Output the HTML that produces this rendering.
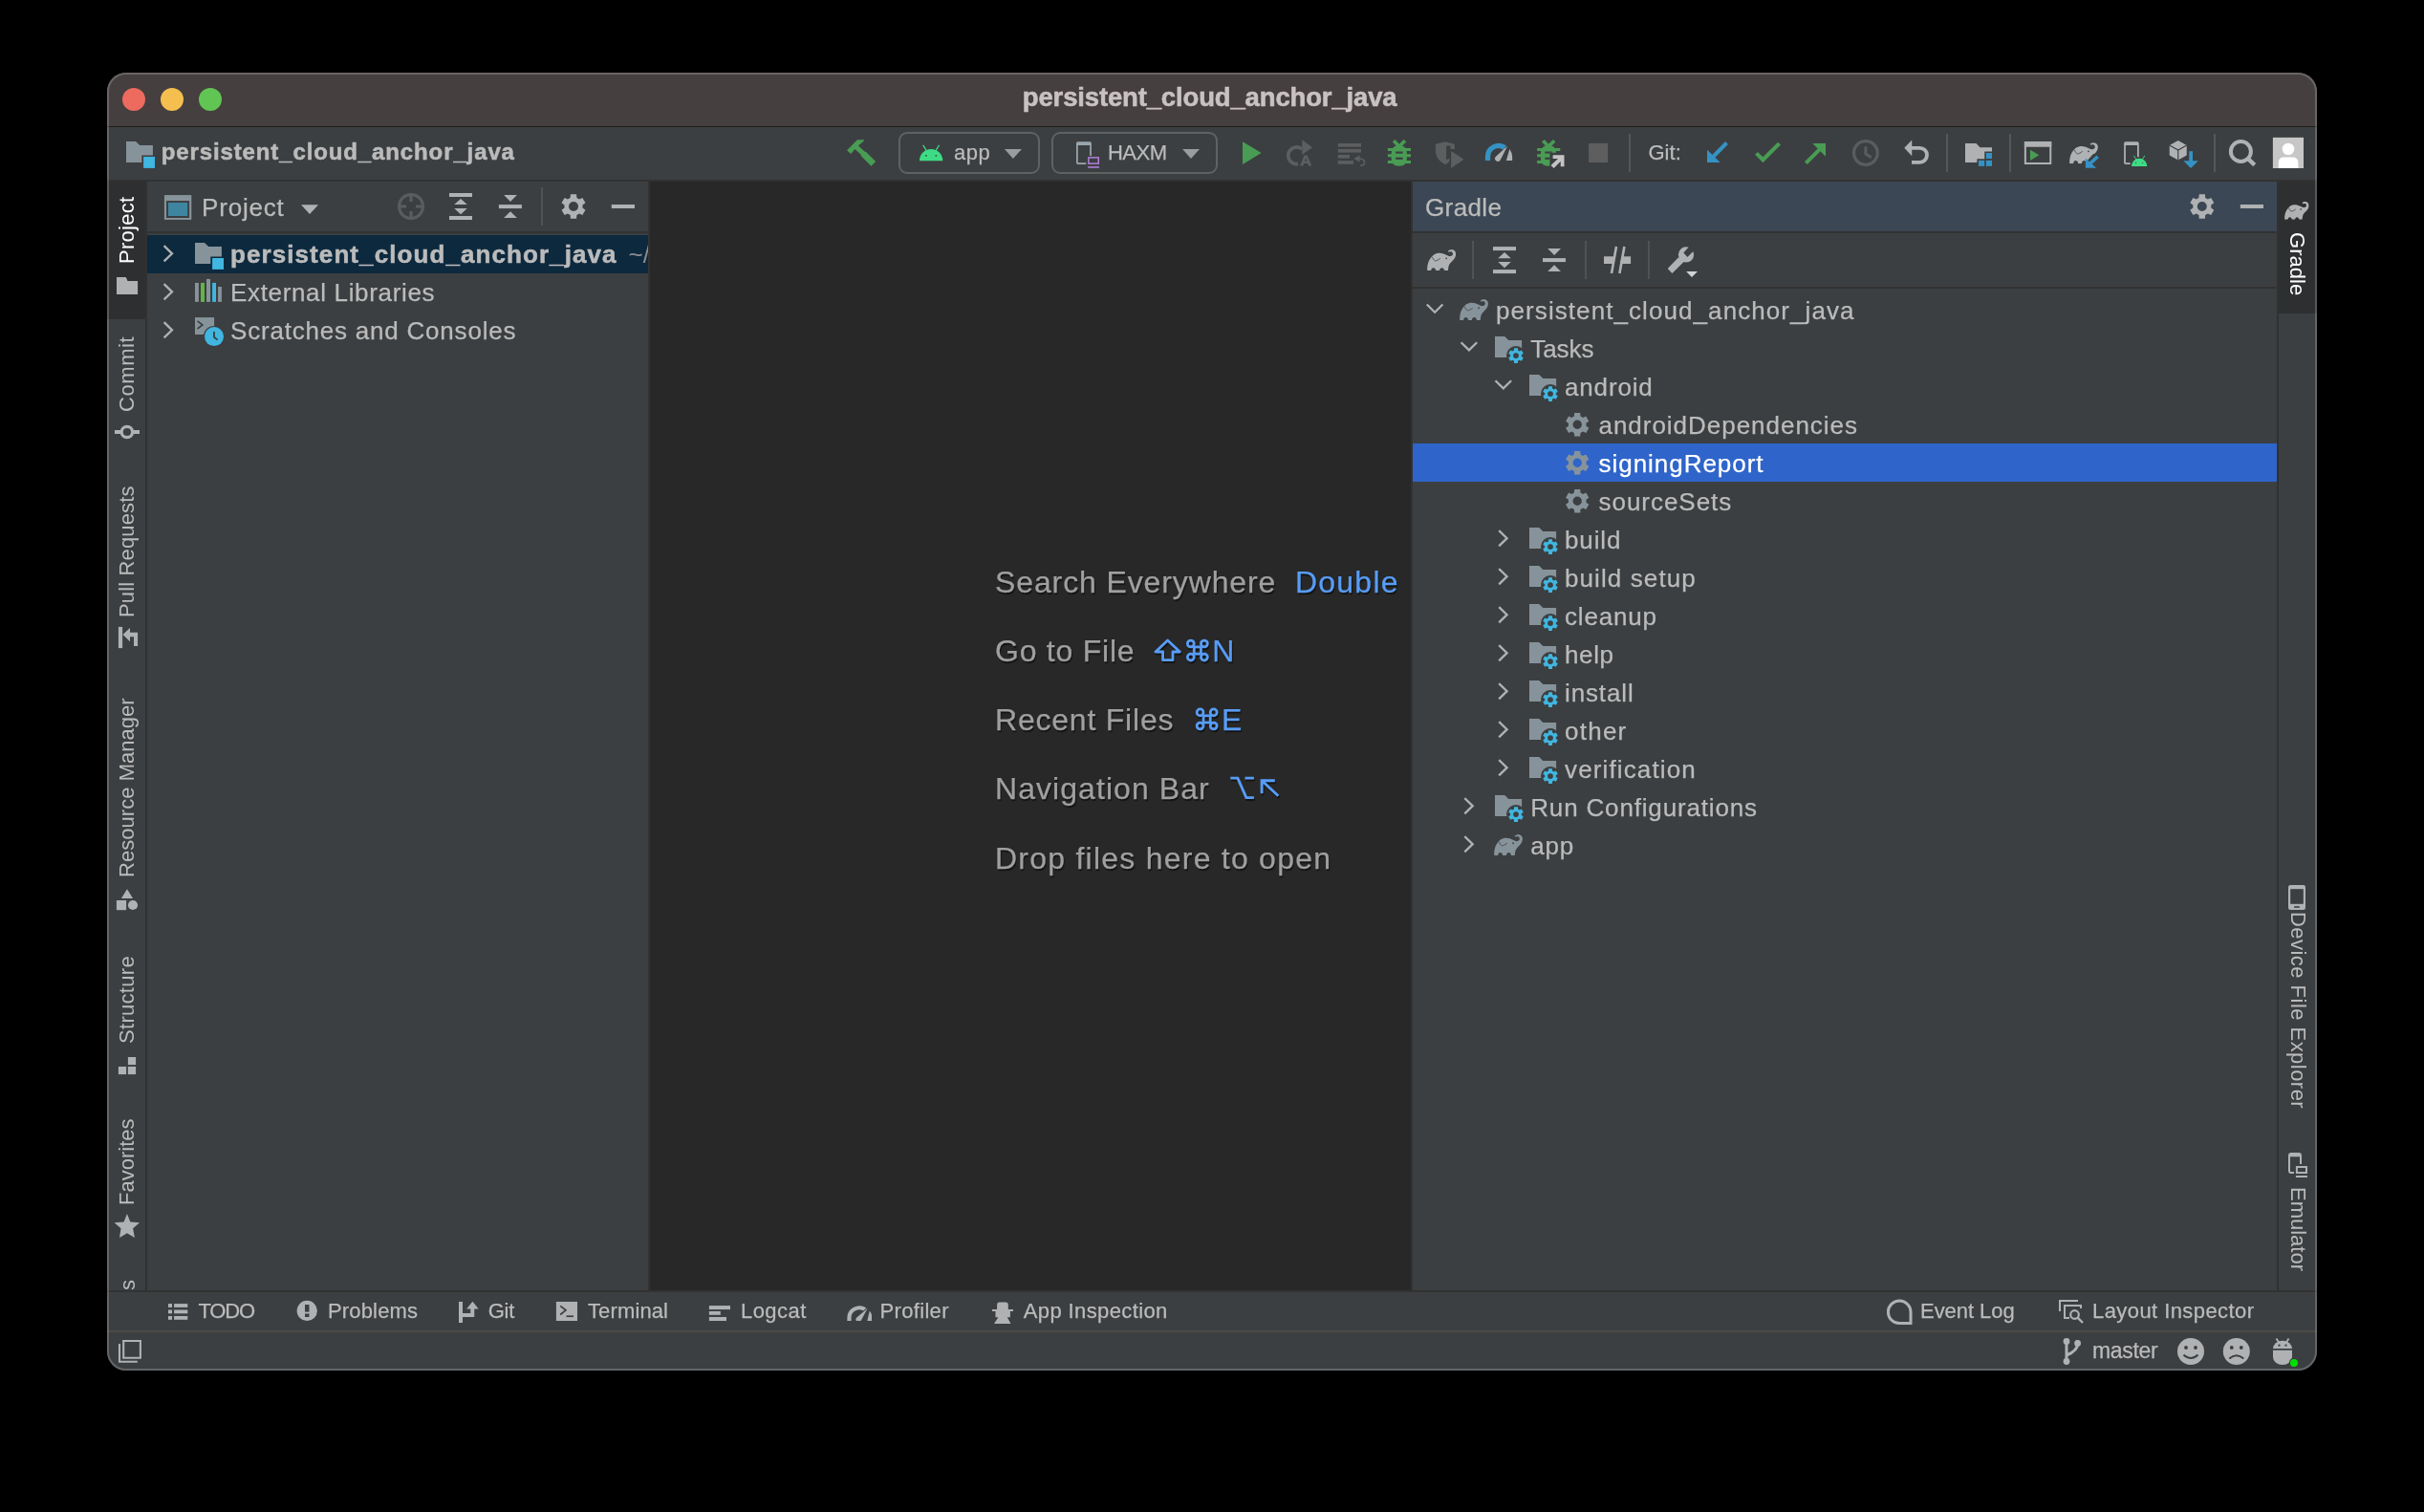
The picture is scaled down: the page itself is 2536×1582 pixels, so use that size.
<!DOCTYPE html>
<html><head><meta charset="utf-8"><title>persistent_cloud_anchor_java</title>
<style>
html,body{margin:0;padding:0;background:#000;}
body{width:2536px;height:1582px;position:relative;overflow:hidden;font-family:"Liberation Sans",sans-serif;}
.t{position:absolute;white-space:pre;font-family:"Liberation Sans",sans-serif;}
#win{position:absolute;left:112px;top:76px;width:2312px;height:1358px;border-radius:20px;overflow:hidden;background:#3c3f41;}
#in{position:absolute;left:-112px;top:-76px;width:2536px;height:1582px;will-change:transform;}
</style></head><body>
<div id="win"><div id="in">
<div style="position:absolute;left:112px;top:76px;width:2312px;height:56px;background:#453f3f;"></div>
<div style="position:absolute;left:112px;top:132px;width:2312px;height:1px;background:#1e1c1c;"></div>
<div style="position:absolute;left:112px;top:133px;width:2312px;height:55px;background:#3c3f41;"></div>
<div style="position:absolute;left:112px;top:188px;width:2312px;height:2px;background:#323232;"></div>
<div style="position:absolute;left:112px;top:190px;width:2312px;height:1160px;background:#3c3f41;"></div>
<div style="position:absolute;left:680px;top:190px;width:796px;height:1160px;background:#282828;"></div>
<div style="position:absolute;left:678px;top:190px;width:2px;height:1160px;background:#323232;"></div>
<div style="position:absolute;left:1476px;top:190px;width:2px;height:1160px;background:#323232;"></div>
<div style="position:absolute;left:112px;top:190px;width:40px;height:144px;background:#2d2f30;"></div>
<div style="position:absolute;left:152.4px;top:190px;width:2px;height:1160px;background:#313131;"></div>
<div style="position:absolute;left:154px;top:242px;width:524px;height:2px;background:#323232;"></div>
<div style="position:absolute;left:154px;top:246px;width:524px;height:40px;background:#0d293e;"></div>
<div style="position:absolute;left:1478px;top:190px;width:904px;height:52px;background:#3b4754;"></div>
<div style="position:absolute;left:1478px;top:242px;width:904px;height:2px;background:#323232;"></div>
<div style="position:absolute;left:1478px;top:300px;width:904px;height:2px;background:#323232;"></div>
<div style="position:absolute;left:1478px;top:464px;width:904px;height:40px;background:#2f65ca;"></div>
<div style="position:absolute;left:2382px;top:190px;width:2px;height:1160px;background:#313131;"></div>
<div style="position:absolute;left:2384px;top:190px;width:40px;height:138px;background:#2d2f30;"></div>
<div style="position:absolute;left:112px;top:1350px;width:2312px;height:2px;background:#323232;"></div>
<div style="position:absolute;left:112px;top:1352px;width:2312px;height:40px;background:#3c3f41;"></div>
<div style="position:absolute;left:112px;top:1392px;width:2312px;height:2px;background:#4a4a49;"></div>
<div style="position:absolute;left:112px;top:1394px;width:2312px;height:40px;background:#3c3f41;"></div>
<div style="position:absolute;left:128px;top:92px;width:24px;height:24px;border-radius:12px;background:#ed6a5e"></div>
<div style="position:absolute;left:168px;top:92px;width:24px;height:24px;border-radius:12px;background:#f5bf4f"></div>
<div style="position:absolute;left:208px;top:92px;width:24px;height:24px;border-radius:12px;background:#61c554"></div>
<div class="t" style="left:1069.8px;top:88.42px;font-size:27.5px;line-height:27.5px;color:#c9c2c2;font-weight:bold;-webkit-text-stroke:0.55px #c9c2c2;letter-spacing:-0.150px;">persistent_cloud_anchor_java</div>
<div class="t" style="left:168.75px;top:147.18px;font-size:24px;line-height:24px;color:#bbbbbb;font-weight:bold;-webkit-text-stroke:0.55px #bbbbbb;letter-spacing:0.879px;">persistent_cloud_anchor_java</div>
<div style="position:absolute;left:940px;top:138px;width:144px;height:40px;border:2px solid #5f6163;border-radius:9px;"></div>
<div style="position:absolute;left:1100px;top:138px;width:170px;height:40px;border:2px solid #5f6163;border-radius:9px;"></div>
<div class="t" style="left:998px;top:148.87px;font-size:22px;line-height:22px;color:#bbbbbb;-webkit-text-stroke:0.25px #bbbbbb;letter-spacing:0.522px;">app</div>
<div class="t" style="left:1159px;top:148.87px;font-size:22px;line-height:22px;color:#bbbbbb;-webkit-text-stroke:0.25px #bbbbbb;letter-spacing:-0.521px;">HAXM</div>
<div class="t" style="left:1724.5px;top:149.37px;font-size:22px;line-height:22px;color:#bbbbbb;-webkit-text-stroke:0.25px #bbbbbb;letter-spacing:0.009px;">Git:</div>
<div style="position:absolute;left:1704px;top:140px;width:2px;height:40px;background:#55585a;"></div>
<div style="position:absolute;left:2036px;top:140px;width:2px;height:40px;background:#55585a;"></div>
<div style="position:absolute;left:2102px;top:140px;width:2px;height:40px;background:#55585a;"></div>
<div style="position:absolute;left:2316px;top:140px;width:2px;height:40px;background:#55585a;"></div>
<div class="t" style="left:211px;top:203.99px;font-size:26px;line-height:26px;color:#bbbbbb;-webkit-text-stroke:0.25px #bbbbbb;letter-spacing:0.813px;">Project</div>
<div style="position:absolute;left:566px;top:196px;width:2px;height:40px;background:#505355;"></div>
<div class="t" style="left:241px;top:253.49px;font-size:26px;line-height:26px;color:#bbbbbb;font-weight:bold;-webkit-text-stroke:0.55px #bbbbbb;letter-spacing:1.083px;">persistent_cloud_anchor_java</div>
<div style="position:absolute;left:650px;top:246px;width:28px;height:40px;overflow:hidden;">
<div class="t" style="left:7.5px;top:7.49px;font-size:26px;line-height:26px;color:#8a8d8f;">~/Desktop</div></div>
<div class="t" style="left:241px;top:293.49px;font-size:26px;line-height:26px;color:#bbbbbb;-webkit-text-stroke:0.25px #bbbbbb;letter-spacing:0.658px;">External Libraries</div>
<div class="t" style="left:241px;top:333.49px;font-size:26px;line-height:26px;color:#bbbbbb;-webkit-text-stroke:0.25px #bbbbbb;letter-spacing:0.794px;">Scratches and Consoles</div>
<div class="t" style="left:1491px;top:203.74px;font-size:26px;line-height:26px;color:#bbbbbb;-webkit-text-stroke:0.25px #bbbbbb;letter-spacing:0.392px;">Gradle</div>
<div style="position:absolute;left:1540px;top:252px;width:2px;height:40px;background:#505355;"></div>
<div style="position:absolute;left:1658px;top:252px;width:2px;height:40px;background:#505355;"></div>
<div style="position:absolute;left:1724px;top:252px;width:2px;height:40px;background:#505355;"></div>
<div class="t" style="left:1565px;top:311.74px;font-size:26px;line-height:26px;color:#bbbbbb;-webkit-text-stroke:0.25px #bbbbbb;letter-spacing:1.076px;">persistent_cloud_anchor_java</div>
<div class="t" style="left:1601.25px;top:351.74px;font-size:26px;line-height:26px;color:#bbbbbb;-webkit-text-stroke:0.25px #bbbbbb;letter-spacing:-0.053px;">Tasks</div>
<div class="t" style="left:1637px;top:391.74px;font-size:26px;line-height:26px;color:#bbbbbb;-webkit-text-stroke:0.25px #bbbbbb;letter-spacing:0.836px;">android</div>
<div class="t" style="left:1672.5px;top:431.74px;font-size:26px;line-height:26px;color:#bbbbbb;-webkit-text-stroke:0.25px #bbbbbb;letter-spacing:0.974px;">androidDependencies</div>
<div class="t" style="left:1672.5px;top:471.74px;font-size:26px;line-height:26px;color:#ffffff;-webkit-text-stroke:0.25px #ffffff;letter-spacing:0.964px;">signingReport</div>
<div class="t" style="left:1672.5px;top:511.74px;font-size:26px;line-height:26px;color:#bbbbbb;-webkit-text-stroke:0.25px #bbbbbb;letter-spacing:0.965px;">sourceSets</div>
<div class="t" style="left:1637px;top:551.74px;font-size:26px;line-height:26px;color:#bbbbbb;-webkit-text-stroke:0.25px #bbbbbb;letter-spacing:0.892px;">build</div>
<div class="t" style="left:1637px;top:591.74px;font-size:26px;line-height:26px;color:#bbbbbb;-webkit-text-stroke:0.25px #bbbbbb;letter-spacing:1.099px;">build setup</div>
<div class="t" style="left:1637px;top:631.74px;font-size:26px;line-height:26px;color:#bbbbbb;-webkit-text-stroke:0.25px #bbbbbb;letter-spacing:0.821px;">cleanup</div>
<div class="t" style="left:1637px;top:671.74px;font-size:26px;line-height:26px;color:#bbbbbb;-webkit-text-stroke:0.25px #bbbbbb;letter-spacing:0.614px;">help</div>
<div class="t" style="left:1637px;top:711.74px;font-size:26px;line-height:26px;color:#bbbbbb;-webkit-text-stroke:0.25px #bbbbbb;letter-spacing:0.879px;">install</div>
<div class="t" style="left:1637px;top:751.74px;font-size:26px;line-height:26px;color:#bbbbbb;-webkit-text-stroke:0.25px #bbbbbb;letter-spacing:1.247px;">other</div>
<div class="t" style="left:1637px;top:791.74px;font-size:26px;line-height:26px;color:#bbbbbb;-webkit-text-stroke:0.25px #bbbbbb;letter-spacing:1.134px;">verification</div>
<div class="t" style="left:1601.25px;top:831.74px;font-size:26px;line-height:26px;color:#bbbbbb;-webkit-text-stroke:0.25px #bbbbbb;letter-spacing:0.834px;">Run Configurations</div>
<div class="t" style="left:1601.25px;top:871.74px;font-size:26px;line-height:26px;color:#bbbbbb;-webkit-text-stroke:0.25px #bbbbbb;letter-spacing:0.810px;">app</div>
<div class="t" style="left:1041px;top:593.21px;font-size:32px;line-height:32px;color:#a0a0a0;-webkit-text-stroke:0.25px #a0a0a0;letter-spacing:0.885px;text-shadow:1px 2px 1px rgba(0,0,0,0.55);">Search Everywhere</div>
<div class="t" style="left:1355px;top:593.21px;font-size:32px;line-height:32px;color:#589df6;-webkit-text-stroke:0.25px #589df6;letter-spacing:1.219px;text-shadow:1px 2px 1px rgba(0,0,0,0.55);">Double</div>
<div class="t" style="left:1041px;top:664.91px;font-size:32px;line-height:32px;color:#a0a0a0;-webkit-text-stroke:0.25px #a0a0a0;letter-spacing:0.765px;text-shadow:1px 2px 1px rgba(0,0,0,0.55);">Go to File</div>
<div class="t" style="left:1041px;top:736.91px;font-size:32px;line-height:32px;color:#a0a0a0;-webkit-text-stroke:0.25px #a0a0a0;letter-spacing:0.787px;text-shadow:1px 2px 1px rgba(0,0,0,0.55);">Recent Files</div>
<div class="t" style="left:1041px;top:809.41px;font-size:32px;line-height:32px;color:#a0a0a0;-webkit-text-stroke:0.25px #a0a0a0;letter-spacing:1.062px;text-shadow:1px 2px 1px rgba(0,0,0,0.55);">Navigation Bar</div>
<div class="t" style="left:1041px;top:881.91px;font-size:32px;line-height:32px;color:#a0a0a0;-webkit-text-stroke:0.25px #a0a0a0;letter-spacing:1.239px;text-shadow:1px 2px 1px rgba(0,0,0,0.55);">Drop files here to open</div>
<div class="t" style="left:1268.2px;top:664.91px;font-size:32px;line-height:32px;color:#589df6;-webkit-text-stroke:0.25px #589df6;text-shadow:1px 2px 1px rgba(0,0,0,0.55);">N</div>
<div class="t" style="left:1277.9px;top:736.91px;font-size:32px;line-height:32px;color:#589df6;-webkit-text-stroke:0.25px #589df6;text-shadow:1px 2px 1px rgba(0,0,0,0.55);">E</div>
<div class="t" style="left:207.5px;top:1361.37px;font-size:22px;line-height:22px;color:#bbbbbb;-webkit-text-stroke:0.25px #bbbbbb;letter-spacing:-1.218px;">TODO</div>
<div class="t" style="left:343px;top:1361.37px;font-size:22px;line-height:22px;color:#bbbbbb;-webkit-text-stroke:0.25px #bbbbbb;letter-spacing:0.154px;">Problems</div>
<div class="t" style="left:510.75px;top:1361.37px;font-size:22px;line-height:22px;color:#bbbbbb;-webkit-text-stroke:0.25px #bbbbbb;letter-spacing:-0.306px;">Git</div>
<div class="t" style="left:615px;top:1361.37px;font-size:22px;line-height:22px;color:#bbbbbb;-webkit-text-stroke:0.25px #bbbbbb;letter-spacing:0.124px;">Terminal</div>
<div class="t" style="left:775px;top:1361.37px;font-size:22px;line-height:22px;color:#bbbbbb;-webkit-text-stroke:0.25px #bbbbbb;letter-spacing:0.439px;">Logcat</div>
<div class="t" style="left:920.5px;top:1361.37px;font-size:22px;line-height:22px;color:#bbbbbb;-webkit-text-stroke:0.25px #bbbbbb;letter-spacing:0.331px;">Profiler</div>
<div class="t" style="left:1070.75px;top:1361.37px;font-size:22px;line-height:22px;color:#bbbbbb;-webkit-text-stroke:0.25px #bbbbbb;letter-spacing:0.381px;">App Inspection</div>
<div class="t" style="left:2009px;top:1361.37px;font-size:22px;line-height:22px;color:#bbbbbb;-webkit-text-stroke:0.25px #bbbbbb;letter-spacing:-0.047px;">Event Log</div>
<div class="t" style="left:2189px;top:1361.37px;font-size:22px;line-height:22px;color:#bbbbbb;-webkit-text-stroke:0.25px #bbbbbb;letter-spacing:0.423px;">Layout Inspector</div>
<div class="t" style="left:2189px;top:1402.23px;font-size:23px;line-height:23px;color:#bbbbbb;-webkit-text-stroke:0.25px #bbbbbb;letter-spacing:-0.318px;">master</div>
<div class="t" style="left:121.79px;top:276.00px;font-size:22px;line-height:22px;color:#ffffff;letter-spacing:0.255px;transform-origin:0 0;transform:rotate(-90deg);">Project</div>
<div class="t" style="left:121.79px;top:431.00px;font-size:22px;line-height:22px;color:#bbbbbb;letter-spacing:0.585px;transform-origin:0 0;transform:rotate(-90deg);">Commit</div>
<div class="t" style="left:121.79px;top:645.60px;font-size:22px;line-height:22px;color:#bbbbbb;letter-spacing:0.138px;transform-origin:0 0;transform:rotate(-90deg);">Pull Requests</div>
<div class="t" style="left:121.79px;top:918.20px;font-size:22px;line-height:22px;color:#bbbbbb;letter-spacing:0.040px;transform-origin:0 0;transform:rotate(-90deg);">Resource Manager</div>
<div class="t" style="left:121.79px;top:1092.00px;font-size:22px;line-height:22px;color:#bbbbbb;letter-spacing:0.305px;transform-origin:0 0;transform:rotate(-90deg);">Structure</div>
<div class="t" style="left:121.79px;top:1261.00px;font-size:22px;line-height:22px;color:#bbbbbb;letter-spacing:0.004px;transform-origin:0 0;transform:rotate(-90deg);">Favorites</div>
<div style="position:absolute;left:112px;top:1300px;width:40px;height:50px;overflow:hidden;">
<div class="t" style="left:10.79px;top:50.00px;font-size:22px;line-height:22px;color:#bbbbbb;transform-origin:0 0;transform:rotate(-90deg);">s</div></div>
<div class="t" style="left:2413.91px;top:242.80px;font-size:22px;line-height:22px;color:#ffffff;letter-spacing:0.033px;transform-origin:0 0;transform:rotate(90deg);">Gradle</div>
<div class="t" style="left:2414.71px;top:953.70px;font-size:22px;line-height:22px;color:#bbbbbb;letter-spacing:0.466px;transform-origin:0 0;transform:rotate(90deg);">Device File Explorer</div>
<div class="t" style="left:2414.71px;top:1242.00px;font-size:22px;line-height:22px;color:#bbbbbb;letter-spacing:-0.005px;transform-origin:0 0;transform:rotate(90deg);">Emulator</div>
<svg style="position:absolute;left:876px;top:136px" width="303.000" height="48.000" viewBox="0 0 2424 384"><path d="M80.7,169.5 L167.4,81.7 L223.5,81.7 L223.5,90.2 L175.9,131.4 L228.8,180.1 L240.4,184.3 L320.8,264.7 L283.8,302.8 L201.3,220.3 L199.2,207.6 L147.3,159.0 L113.5,200.2 Z" fill="#499c54"/><path d="M688,257 A97,97 0 0 1 882,257 Z" fill="#3ddc84"/><path d="M720.0,130.0 L745.0,172.0 M850.0,130.0 L825.0,172.0" stroke="#3ddc84" stroke-width="11.0" stroke-linecap="round"/><rect x="737.0" y="209.0" width="12.0" height="12.0" fill="#3c3f41"/><rect x="821.0" y="209.0" width="12.0" height="12.0" fill="#3c3f41"/><path d="M1400,160 L1543,160 L1471,240 Z" fill="#9a9da0"/></svg>
<svg style="position:absolute;left:1100px;top:136px" width="303.000" height="48.000" viewBox="0 0 2424 384"><path d="M215.0,111 Q215.0,104.0 222,104.0 L321,104.0 Q328.0,104.0 328.0,111 L328.0,215 M290,280.0 L222,280.0 Q215.0,280.0 215.0,273 L215.0,111" fill="none" stroke="#9aa7b0" stroke-width="14"/><rect x="215.0" y="104.0" width="113" height="24" fill="#9aa7b0"/><rect x="311" y="231" width="83" height="50" fill="none" stroke="#b07fd8" stroke-width="12"/><rect x="305" y="305" width="95" height="13" fill="#b07fd8"/><path d="M1097,160 L1240,160 L1168,240 Z" fill="#9a9da0"/><path d="M1600,97 L1600,288 L1757,192 Z" fill="#499c54"/></svg>
<svg style="position:absolute;left:1340px;top:136px" width="303.000" height="48.000" viewBox="0 0 2424 384"><path d="M177,160.6 A69.8,69.8 0 1 0 144.6,282.7" fill="none" stroke="#5c5e60" stroke-width="30"/><path d="M178,82 L264,145 L178,208 Z" fill="#5c5e60"/><path d="M160,300 L196,212 L222,212 L258,300 L232,300 L225,280 L193,280 L186,300 Z M200,262 L218,262 L209,234 Z" fill="#5c5e60" fill-rule="evenodd"/><rect x="478" y="112" width="194" height="29" fill="#5c5e60"/><rect x="478" y="160" width="194" height="29" fill="#5c5e60"/><rect x="478" y="208" width="98" height="29" fill="#5c5e60"/><rect x="478" y="257" width="130" height="29" fill="#5c5e60"/><path d="M612,240 L660,210 L660,270 Z" fill="#5c5e60"/><path d="M655,240 Q700,240 700,270 Q700,298 665,298" fill="none" stroke="#5c5e60" stroke-width="13"/><g ><path d="M945,90 L990,138 L1040,90" fill="none" stroke="#499c54" stroke-width="29"/><path d="M925,200 Q925,128 990,128 Q1055,128 1055,200 L1055,240 Q1055,300 990,302 Q925,300 925,240 Z" fill="#499c54"/><rect x="895" y="152" width="193" height="24" fill="#499c54"/><rect x="895" y="202" width="193" height="24" fill="#499c54"/><rect x="895" y="256" width="193" height="24" fill="#499c54"/><rect x="961" y="180" width="60" height="17" fill="#3c3f41"/><rect x="961" y="229.5" width="60" height="17.5" fill="#3c3f41"/></g><path d="M1295,118 L1375,97 L1455,118 L1455,160 L1420,160 L1420,132 L1385,132 L1385,250 L1410,235 L1410,265 Q1390,282 1375,290 Q1295,250 1295,170 Z" fill="#5c5e60"/><path d="M1425,175 L1532,246 L1425,320 Z" fill="#5c5e60"/><path d="M1732.4,255.2 V222.4 A90.8,90.8 0 0 1 1875.3,148" fill="none" stroke="#3592c4" stroke-width="42.4"/><path d="M1914.4,159.8 A112,112 0 0 1 1936.8,222.4 V255.2 H1887.2 Z" fill="#afb1b3"/><path d="M1897,134 L1836,254 A24,24 0 0 1 1797.5,224 Z" fill="#afb1b3"/></svg>
<svg style="position:absolute;left:1600px;top:136px" width="303.000" height="48.000" viewBox="0 0 2424 384"><defs><clipPath id="bc"><path d="M0,0 L300,0 L300,190 L170,190 L170,384 L0,384 Z"/></clipPath></defs><g clip-path="url(#bc)"><path d="M115,90 L160,138 L210,90" fill="none" stroke="#499c54" stroke-width="29"/><path d="M95,200 Q95,128 160,128 Q225,128 225,200 L225,240 Q225,300 160,302 Q95,300 95,240 Z" fill="#499c54"/><rect x="65" y="152" width="193" height="24" fill="#499c54"/><rect x="65" y="202" width="193" height="24" fill="#499c54"/><rect x="65" y="256" width="193" height="24" fill="#499c54"/><rect x="131" y="180" width="60" height="17" fill="#3c3f41"/><rect x="131" y="229.5" width="60" height="17.5" fill="#3c3f41"/></g><path d="M180,295 L205,320 L262,262 L262,305 L292,305 L292,210 L197,210 L197,240 L240,240 Z" fill="#c4c4c4"/><rect x="497" y="112" width="160" height="160" fill="#5e5e5e"/><path d="M1652,108 L1530,232" stroke="#3592c4" stroke-width="32" fill="none"/><path d="M1488,165 L1488,272 L1598,272 Z" fill="#3592c4"/><path d="M1900,195 L1955,250 L2092,113" stroke="#499c54" stroke-width="33" fill="none"/></svg>
<svg style="position:absolute;left:1870px;top:136px" width="303.000" height="48.000" viewBox="0 0 2424 384"><path d="M155,277 L285,147" stroke="#499c54" stroke-width="32" fill="none"/><path d="M210,112 L320,112 L320,222 Z" fill="#499c54"/><circle cx="655" cy="192" r="99" fill="none" stroke="#5a5c5e" stroke-width="26"/><path d="M655,138 L655,200 L702,230" fill="none" stroke="#5a5c5e" stroke-width="24"/><path d="M978,150 L1042,83 L1042,217 Z" fill="#afb1b3"/><path d="M1040,150 L1108,150 A60,60 0 0 1 1108,270 L1040,270" fill="none" stroke="#afb1b3" stroke-width="30"/><path d="M1488,112 L1580,112 L1612,145 L1712,145 L1712,180 L1650,180 L1650,242 L1587,242 L1587,272 L1488,272 Z" fill="#afb1b3"/><rect x="1663" y="192" width="49" height="48" fill="#3592c4"/><rect x="1600" y="255" width="49" height="48" fill="#3592c4"/><rect x="1663" y="255" width="49" height="48" fill="#3592c4"/><rect x="1991" y="105" width="211" height="175" fill="none" stroke="#afb1b3" stroke-width="16"/><rect x="1983" y="97" width="227" height="45" fill="#afb1b3"/><path d="M2032,165 L2032,255 L2106,210 Z" fill="#499c54"/></svg>
<svg style="position:absolute;left:2130px;top:136px" width="303.000" height="48.000" viewBox="0 0 2424 384"><defs><clipPath id="ec"><path d="M0,0 L2424,0 L2424,200 L480,200 L400,290 L400,384 L0,384 Z"/></clipPath></defs><g clip-path="url(#ec)"><svg x="280" y="105" width="240" height="176.22" viewBox="225 225 1430 1050" ><path d="M235,1275 C225,1100 250,900 340,740 C400,640 470,560 560,480 C680,410 850,380 1000,430 C1100,460 1200,520 1300,560 C1380,575 1450,555 1490,500 C1515,450 1500,380 1460,350 C1420,325 1350,325 1300,355 L1255,305 C1300,250 1400,215 1500,240 C1600,270 1655,370 1650,470 C1640,600 1560,720 1440,830 C1340,920 1290,1020 1275,1150 L1262,1275 L1080,1275 C1075,1180 1020,1130 960,1130 C900,1130 845,1180 840,1275 L660,1275 C655,1180 600,1130 540,1130 C480,1130 425,1180 420,1275 Z" fill="#afb1b3"/><path d="M470,590 C520,680 560,760 620,790 C680,800 800,720 880,670" fill="none" stroke="#3c3f41" stroke-width="42" opacity="0.9"/><circle cx="1180" cy="665" r="44" fill="#3c3f41" opacity="0.9"/></svg></g><path d="M517,222 L445,290" stroke="#3592c4" stroke-width="30" fill="none"/><path d="M415,235 L415,318 L505,318 Z" fill="#3592c4"/><path d="M744.0,111 Q744.0,104.0 751,104.0 L848,104.0 Q855.0,104.0 855.0,111 L855.0,225 M790,280.0 L751,280.0 Q744.0,280.0 744.0,273 L744.0,111" fill="none" stroke="#afb1b3" stroke-width="14"/><rect x="744.0" y="104.0" width="111" height="24" fill="#afb1b3"/><path d="M800,303 A65,65 0 0 1 930,303 Z" fill="#3ddc84"/><path d="M821.4432989690722,217.89690721649487 L838.1958762886597,246.04123711340208 M908.5567010309278,217.89690721649487 L891.8041237113403,246.04123711340208" stroke="#3ddc84" stroke-width="7.371134020618556" stroke-linecap="round"/><rect x="832.8350515463917" y="270.83505154639175" width="8.041237113402062" height="8.041237113402062" fill="#3c3f41"/><rect x="889.1237113402062" y="270.83505154639175" width="8.041237113402062" height="8.041237113402062" fill="#3c3f41"/><path d="M1190,88 L1262,128 L1262,212 L1190,252 L1118,212 L1118,128 Z" fill="#afb1b3"/><path d="M1118,128 L1190,168 L1262,128 M1190,168 L1190,252" stroke="#3c3f41" stroke-width="9" fill="none"/><rect x="1268" y="170" width="58" height="100" fill="#3c3f41"/><path d="M1225,250 L1368,250 L1297,326 Z" fill="#3c3f41"/><rect x="1282" y="178" width="30" height="85" fill="#3592c4"/><path d="M1235,258 L1358,258 L1297,320 Z" fill="#3592c4"/><circle cx="1715" cy="180" r="84" fill="none" stroke="#afb1b3" stroke-width="32"/><path d="M1778,243 L1830,293" stroke="#afb1b3" stroke-width="34"/><rect x="1983" y="63" width="257" height="257" fill="#c7c7c7"/><circle cx="2112" cy="160" r="50" fill="#fff"/><path d="M2030,320 L2030,275 Q2030,228 2080,228 L2145,228 Q2195,228 2195,275 L2195,320 Z" fill="#fff"/></svg>
<svg style="position:absolute;left:0;top:0" width="2536" height="1582" viewBox="0 0 2536 1582"><rect x="171.9" y="204.1" width="28.4" height="25.8" fill="#87939a"/><rect x="174" y="210.1" width="24.1" height="17.9" fill="#3c3f41"/><rect x="176" y="212" width="20.2" height="14" fill="#3e86a0"/><path d="M315,214.2 L333.1,214.2 L324,223.9 Z" fill="#afb1b3"/><circle cx="430" cy="216" r="12.4" fill="none" stroke="#5a5c5e" stroke-width="3.2"/><path d="M430,203 v8 M430,229 v-8 M417,216 h8 M443,216 h-8" stroke="#5a5c5e" stroke-width="3.2"/><rect x="470" y="202" width="24" height="4" fill="#afb1b3"/><rect x="470" y="226" width="24" height="4" fill="#afb1b3"/><path d="M475.2,214.1 L488.8,214.1 L482,208 Z M475.2,218 L488.8,218 L482,224.2 Z" fill="#afb1b3"/><rect x="521.9" y="214.1" width="24" height="4" fill="#afb1b3"/><path d="M527.1,204.1 L540.9,204.1 L534.0,211.0 Z M527.1,228.1 L540.9,228.1 L534.0,221.2 Z" fill="#afb1b3"/><path d="M596.62,207.02 L596.91,203.37 L603.09,203.37 L603.38,207.02 L606.09,208.58 L609.39,207.01 L612.48,212.36 L609.47,214.44 L609.47,217.56 L612.48,219.64 L609.39,224.99 L606.09,223.42 L603.38,224.98 L603.09,228.63 L596.91,228.63 L596.62,224.98 L593.91,223.42 L590.61,224.99 L587.52,219.64 L590.53,217.56 L590.53,214.44 L587.52,212.36 L590.61,207.01 L593.91,208.58 Z M605.00,216.00 A5,5 0 1 0 595.00,216.00 A5,5 0 1 0 605.00,216.00 Z" fill="#afb1b3" fill-rule="evenodd"/><rect x="639.8" y="214" width="24.2" height="4" fill="#afb1b3"/><path d="M2300.42,207.02 L2300.71,203.37 L2306.89,203.37 L2307.18,207.02 L2309.89,208.58 L2313.19,207.01 L2316.28,212.36 L2313.27,214.44 L2313.27,217.56 L2316.28,219.64 L2313.19,224.99 L2309.89,223.42 L2307.18,224.98 L2306.89,228.63 L2300.71,228.63 L2300.42,224.98 L2297.71,223.42 L2294.41,224.99 L2291.32,219.64 L2294.33,217.56 L2294.33,214.44 L2291.32,212.36 L2294.41,207.01 L2297.71,208.58 Z M2308.80,216.00 A5,5 0 1 0 2298.80,216.00 A5,5 0 1 0 2308.80,216.00 Z" fill="#afb1b3" fill-rule="evenodd"/><rect x="2343.8" y="214" width="24.2" height="4" fill="#afb1b3"/><path d="M171.60000000000002,257.2 L180.0,265.3 L171.60000000000002,273.40000000000003" fill="none" stroke="#afb1b3" stroke-width="2.3"/><path d="M171.60000000000002,297.2 L180.0,305.3 L171.60000000000002,313.40000000000003" fill="none" stroke="#afb1b3" stroke-width="2.3"/><path d="M171.60000000000002,337.2 L180.0,345.3 L171.60000000000002,353.40000000000003" fill="none" stroke="#afb1b3" stroke-width="2.3"/><path d="M204,254 h10 l4.2,4.1 h13.7 v10.3 h-11.6 v7.5 h-16.3 Z" fill="#87939a"/><rect x="222.1" y="270" width="11.9" height="11.9" fill="#40b6e0"/><path d="M132,148 h10 l4.2,4.1 h13.7 v10.3 h-11.6 v7.5 h-16.3 Z" fill="#87939a"/><rect x="150.1" y="164" width="11.9" height="11.9" fill="#40b6e0"/><rect x="204" y="295.9" width="3.9" height="20.0" fill="#87939a"/><rect x="210" y="295.9" width="4.0" height="20.0" fill="#62b543"/><rect x="216" y="291.9" width="4.0" height="24.0" fill="#87939a"/><rect x="222.1" y="295.9" width="3.9" height="20.0" fill="#40b6e0"/><rect x="228.1" y="300" width="3.8" height="15.9" fill="#87939a"/><rect x="204" y="332.1" width="20.1" height="17.9" fill="#87939a"/><path d="M206.5,335.9 L211.9,340 L206.5,344" fill="none" stroke="#3c3f41" stroke-width="1.6"/><circle cx="224" cy="352.1" r="11.2" fill="#3c3f41"/><circle cx="224" cy="352.1" r="10" fill="#40b6e0"/><path d="M224,347 V352.8 L227.6,355.6" fill="none" stroke="#3c3f41" stroke-width="1.8"/><rect x="1562" y="258.1" width="24" height="4" fill="#afb1b3"/><rect x="1562" y="282.1" width="24" height="4" fill="#afb1b3"/><path d="M1567.2,270.20000000000005 L1580.8,270.20000000000005 L1574,264.1 Z M1567.2,274.1 L1580.8,274.1 L1574,280.3 Z" fill="#afb1b3"/><rect x="1614" y="270.1" width="24" height="4" fill="#afb1b3"/><path d="M1619.2,260.1 L1633,260.1 L1626.1,267.0 Z M1619.2,284.1 L1633,284.1 L1626.1,277.20000000000005 Z" fill="#afb1b3"/><rect x="1678" y="268.3" width="28.1" height="7.7" fill="#afb1b3"/><path d="M1695,257 L1690,287" stroke="#3c3f41" stroke-width="6.5"/><path d="M1691,258 L1686,286 M1699.4,258 L1694.4,286" stroke="#afb1b3" stroke-width="2.6"/><path d="M1744.7,281 L1749.4,286.1 L1761.6,274 L1756.1,269.3 Z" fill="#afb1b3"/><circle cx="1764" cy="266.4" r="8.1" fill="#afb1b3"/><path d="M1761.3,264.6 L1765.4,268.9 L1775.4,258.9 L1770.3,254.6 Z" fill="#3c3f41"/><path d="M1764.1,284.1 L1776,284.1 L1770,289.9 Z" fill="#d2d2d2"/><path d="M1492.8,318.5 L1501.1,326.70000000000005 L1509.3999999999999,318.5" fill="none" stroke="#afb1b3" stroke-width="2.3"/><path d="M1528.6000000000001,358.2 L1536.9,366.40000000000003 L1545.2,358.2" fill="none" stroke="#afb1b3" stroke-width="2.3"/><path d="M1564.5,398.2 L1572.8,406.40000000000003 L1581.1,398.2" fill="none" stroke="#afb1b3" stroke-width="2.3"/><path d="M1564,352.1 h10.2 l4.1,4 h13.8 v18 h-28.1 Z" fill="#87939a"/><circle cx="1586" cy="372.1" r="10" fill="#3c3f41"/><path d="M1583.92,366.58 L1584.07,364.23 L1587.93,364.23 L1588.08,366.58 L1589.74,367.54 L1591.85,366.50 L1593.78,369.83 L1591.82,371.14 L1591.82,373.06 L1593.78,374.37 L1591.85,377.70 L1589.74,376.66 L1588.08,377.62 L1587.93,379.97 L1584.07,379.97 L1583.92,377.62 L1582.26,376.66 L1580.15,377.70 L1578.22,374.37 L1580.18,373.06 L1580.18,371.14 L1578.22,369.83 L1580.15,366.50 L1582.26,367.54 Z M1588.90,372.10 A2.9,2.9 0 1 0 1583.10,372.10 A2.9,2.9 0 1 0 1588.90,372.10 Z" fill="#40b6e0" fill-rule="evenodd"/><path d="M1600,392.1 h10.2 l4.1,4 h13.8 v18 h-28.1 Z" fill="#87939a"/><circle cx="1622" cy="412.1" r="10" fill="#3c3f41"/><path d="M1619.92,406.58 L1620.07,404.23 L1623.93,404.23 L1624.08,406.58 L1625.74,407.54 L1627.85,406.50 L1629.78,409.83 L1627.82,411.14 L1627.82,413.06 L1629.78,414.37 L1627.85,417.70 L1625.74,416.66 L1624.08,417.62 L1623.93,419.97 L1620.07,419.97 L1619.92,417.62 L1618.26,416.66 L1616.15,417.70 L1614.22,414.37 L1616.18,413.06 L1616.18,411.14 L1614.22,409.83 L1616.15,406.50 L1618.26,407.54 Z M1624.90,412.10 A2.9,2.9 0 1 0 1619.10,412.10 A2.9,2.9 0 1 0 1624.90,412.10 Z" fill="#40b6e0" fill-rule="evenodd"/><path d="M1646.89,435.40 L1647.20,431.96 L1653.20,431.96 L1653.51,435.40 L1656.16,436.93 L1659.30,435.49 L1662.30,440.67 L1659.47,442.67 L1659.47,445.73 L1662.30,447.73 L1659.30,452.91 L1656.16,451.47 L1653.51,453.00 L1653.20,456.44 L1647.20,456.44 L1646.89,453.00 L1644.24,451.47 L1641.10,452.91 L1638.10,447.73 L1640.93,445.73 L1640.93,442.67 L1638.10,440.67 L1641.10,435.49 L1644.24,436.93 Z M1654.90,444.20 A4.7,4.7 0 1 0 1645.50,444.20 A4.7,4.7 0 1 0 1654.90,444.20 Z" fill="#87939a" fill-rule="evenodd"/><path d="M1646.89,475.40 L1647.20,471.96 L1653.20,471.96 L1653.51,475.40 L1656.16,476.93 L1659.30,475.49 L1662.30,480.67 L1659.47,482.67 L1659.47,485.73 L1662.30,487.73 L1659.30,492.91 L1656.16,491.47 L1653.51,493.00 L1653.20,496.44 L1647.20,496.44 L1646.89,493.00 L1644.24,491.47 L1641.10,492.91 L1638.10,487.73 L1640.93,485.73 L1640.93,482.67 L1638.10,480.67 L1641.10,475.49 L1644.24,476.93 Z M1654.90,484.20 A4.7,4.7 0 1 0 1645.50,484.20 A4.7,4.7 0 1 0 1654.90,484.20 Z" fill="#87939a" fill-rule="evenodd"/><path d="M1646.89,515.40 L1647.20,511.96 L1653.20,511.96 L1653.51,515.40 L1656.16,516.93 L1659.30,515.49 L1662.30,520.67 L1659.47,522.67 L1659.47,525.73 L1662.30,527.73 L1659.30,532.91 L1656.16,531.47 L1653.51,533.00 L1653.20,536.44 L1647.20,536.44 L1646.89,533.00 L1644.24,531.47 L1641.10,532.91 L1638.10,527.73 L1640.93,525.73 L1640.93,522.67 L1638.10,520.67 L1641.10,515.49 L1644.24,516.93 Z M1654.90,524.20 A4.7,4.7 0 1 0 1645.50,524.20 A4.7,4.7 0 1 0 1654.90,524.20 Z" fill="#87939a" fill-rule="evenodd"/><path d="M1568.2,555.1 L1576.6000000000001,563.2 L1568.2,571.3000000000001" fill="none" stroke="#afb1b3" stroke-width="2.3"/><path d="M1600,552.1 h10.2 l4.1,4 h13.8 v18 h-28.1 Z" fill="#87939a"/><circle cx="1622" cy="572.1" r="10" fill="#3c3f41"/><path d="M1619.92,566.58 L1620.07,564.23 L1623.93,564.23 L1624.08,566.58 L1625.74,567.54 L1627.85,566.50 L1629.78,569.83 L1627.82,571.14 L1627.82,573.06 L1629.78,574.37 L1627.85,577.70 L1625.74,576.66 L1624.08,577.62 L1623.93,579.97 L1620.07,579.97 L1619.92,577.62 L1618.26,576.66 L1616.15,577.70 L1614.22,574.37 L1616.18,573.06 L1616.18,571.14 L1614.22,569.83 L1616.15,566.50 L1618.26,567.54 Z M1624.90,572.10 A2.9,2.9 0 1 0 1619.10,572.10 A2.9,2.9 0 1 0 1624.90,572.10 Z" fill="#40b6e0" fill-rule="evenodd"/><path d="M1568.2,595.1 L1576.6000000000001,603.2 L1568.2,611.3000000000001" fill="none" stroke="#afb1b3" stroke-width="2.3"/><path d="M1600,592.1 h10.2 l4.1,4 h13.8 v18 h-28.1 Z" fill="#87939a"/><circle cx="1622" cy="612.1" r="10" fill="#3c3f41"/><path d="M1619.92,606.58 L1620.07,604.23 L1623.93,604.23 L1624.08,606.58 L1625.74,607.54 L1627.85,606.50 L1629.78,609.83 L1627.82,611.14 L1627.82,613.06 L1629.78,614.37 L1627.85,617.70 L1625.74,616.66 L1624.08,617.62 L1623.93,619.97 L1620.07,619.97 L1619.92,617.62 L1618.26,616.66 L1616.15,617.70 L1614.22,614.37 L1616.18,613.06 L1616.18,611.14 L1614.22,609.83 L1616.15,606.50 L1618.26,607.54 Z M1624.90,612.10 A2.9,2.9 0 1 0 1619.10,612.10 A2.9,2.9 0 1 0 1624.90,612.10 Z" fill="#40b6e0" fill-rule="evenodd"/><path d="M1568.2,635.1 L1576.6000000000001,643.2 L1568.2,651.3000000000001" fill="none" stroke="#afb1b3" stroke-width="2.3"/><path d="M1600,632.1 h10.2 l4.1,4 h13.8 v18 h-28.1 Z" fill="#87939a"/><circle cx="1622" cy="652.1" r="10" fill="#3c3f41"/><path d="M1619.92,646.58 L1620.07,644.23 L1623.93,644.23 L1624.08,646.58 L1625.74,647.54 L1627.85,646.50 L1629.78,649.83 L1627.82,651.14 L1627.82,653.06 L1629.78,654.37 L1627.85,657.70 L1625.74,656.66 L1624.08,657.62 L1623.93,659.97 L1620.07,659.97 L1619.92,657.62 L1618.26,656.66 L1616.15,657.70 L1614.22,654.37 L1616.18,653.06 L1616.18,651.14 L1614.22,649.83 L1616.15,646.50 L1618.26,647.54 Z M1624.90,652.10 A2.9,2.9 0 1 0 1619.10,652.10 A2.9,2.9 0 1 0 1624.90,652.10 Z" fill="#40b6e0" fill-rule="evenodd"/><path d="M1568.2,675.1 L1576.6000000000001,683.2 L1568.2,691.3000000000001" fill="none" stroke="#afb1b3" stroke-width="2.3"/><path d="M1600,672.1 h10.2 l4.1,4 h13.8 v18 h-28.1 Z" fill="#87939a"/><circle cx="1622" cy="692.1" r="10" fill="#3c3f41"/><path d="M1619.92,686.58 L1620.07,684.23 L1623.93,684.23 L1624.08,686.58 L1625.74,687.54 L1627.85,686.50 L1629.78,689.83 L1627.82,691.14 L1627.82,693.06 L1629.78,694.37 L1627.85,697.70 L1625.74,696.66 L1624.08,697.62 L1623.93,699.97 L1620.07,699.97 L1619.92,697.62 L1618.26,696.66 L1616.15,697.70 L1614.22,694.37 L1616.18,693.06 L1616.18,691.14 L1614.22,689.83 L1616.15,686.50 L1618.26,687.54 Z M1624.90,692.10 A2.9,2.9 0 1 0 1619.10,692.10 A2.9,2.9 0 1 0 1624.90,692.10 Z" fill="#40b6e0" fill-rule="evenodd"/><path d="M1568.2,715.1 L1576.6000000000001,723.2 L1568.2,731.3000000000001" fill="none" stroke="#afb1b3" stroke-width="2.3"/><path d="M1600,712.1 h10.2 l4.1,4 h13.8 v18 h-28.1 Z" fill="#87939a"/><circle cx="1622" cy="732.1" r="10" fill="#3c3f41"/><path d="M1619.92,726.58 L1620.07,724.23 L1623.93,724.23 L1624.08,726.58 L1625.74,727.54 L1627.85,726.50 L1629.78,729.83 L1627.82,731.14 L1627.82,733.06 L1629.78,734.37 L1627.85,737.70 L1625.74,736.66 L1624.08,737.62 L1623.93,739.97 L1620.07,739.97 L1619.92,737.62 L1618.26,736.66 L1616.15,737.70 L1614.22,734.37 L1616.18,733.06 L1616.18,731.14 L1614.22,729.83 L1616.15,726.50 L1618.26,727.54 Z M1624.90,732.10 A2.9,2.9 0 1 0 1619.10,732.10 A2.9,2.9 0 1 0 1624.90,732.10 Z" fill="#40b6e0" fill-rule="evenodd"/><path d="M1568.2,755.1 L1576.6000000000001,763.2 L1568.2,771.3000000000001" fill="none" stroke="#afb1b3" stroke-width="2.3"/><path d="M1600,752.1 h10.2 l4.1,4 h13.8 v18 h-28.1 Z" fill="#87939a"/><circle cx="1622" cy="772.1" r="10" fill="#3c3f41"/><path d="M1619.92,766.58 L1620.07,764.23 L1623.93,764.23 L1624.08,766.58 L1625.74,767.54 L1627.85,766.50 L1629.78,769.83 L1627.82,771.14 L1627.82,773.06 L1629.78,774.37 L1627.85,777.70 L1625.74,776.66 L1624.08,777.62 L1623.93,779.97 L1620.07,779.97 L1619.92,777.62 L1618.26,776.66 L1616.15,777.70 L1614.22,774.37 L1616.18,773.06 L1616.18,771.14 L1614.22,769.83 L1616.15,766.50 L1618.26,767.54 Z M1624.90,772.10 A2.9,2.9 0 1 0 1619.10,772.10 A2.9,2.9 0 1 0 1624.90,772.10 Z" fill="#40b6e0" fill-rule="evenodd"/><path d="M1568.2,795.1 L1576.6000000000001,803.2 L1568.2,811.3000000000001" fill="none" stroke="#afb1b3" stroke-width="2.3"/><path d="M1600,792.1 h10.2 l4.1,4 h13.8 v18 h-28.1 Z" fill="#87939a"/><circle cx="1622" cy="812.1" r="10" fill="#3c3f41"/><path d="M1619.92,806.58 L1620.07,804.23 L1623.93,804.23 L1624.08,806.58 L1625.74,807.54 L1627.85,806.50 L1629.78,809.83 L1627.82,811.14 L1627.82,813.06 L1629.78,814.37 L1627.85,817.70 L1625.74,816.66 L1624.08,817.62 L1623.93,819.97 L1620.07,819.97 L1619.92,817.62 L1618.26,816.66 L1616.15,817.70 L1614.22,814.37 L1616.18,813.06 L1616.18,811.14 L1614.22,809.83 L1616.15,806.50 L1618.26,807.54 Z M1624.90,812.10 A2.9,2.9 0 1 0 1619.10,812.10 A2.9,2.9 0 1 0 1624.90,812.10 Z" fill="#40b6e0" fill-rule="evenodd"/><path d="M1532.3,835.1 L1540.7,843.2 L1532.3,851.3000000000001" fill="none" stroke="#afb1b3" stroke-width="2.3"/><path d="M1564,832.1 h10.2 l4.1,4 h13.8 v18 h-28.1 Z" fill="#87939a"/><circle cx="1586" cy="852.1" r="10" fill="#3c3f41"/><path d="M1583.92,846.58 L1584.07,844.23 L1587.93,844.23 L1588.08,846.58 L1589.74,847.54 L1591.85,846.50 L1593.78,849.83 L1591.82,851.14 L1591.82,853.06 L1593.78,854.37 L1591.85,857.70 L1589.74,856.66 L1588.08,857.62 L1587.93,859.97 L1584.07,859.97 L1583.92,857.62 L1582.26,856.66 L1580.15,857.70 L1578.22,854.37 L1580.18,853.06 L1580.18,851.14 L1578.22,849.83 L1580.15,846.50 L1582.26,847.54 Z M1588.90,852.10 A2.9,2.9 0 1 0 1583.10,852.10 A2.9,2.9 0 1 0 1588.90,852.10 Z" fill="#40b6e0" fill-rule="evenodd"/><path d="M1532.3,875.1 L1540.7,883.2 L1532.3,891.3000000000001" fill="none" stroke="#afb1b3" stroke-width="2.3"/><path d="M122,290.1 h9.8 l1.7,4 h10.6 v13.9 h-22.1 Z" fill="#afb1b3"/><circle cx="132.9" cy="452" r="5.7" fill="none" stroke="#afb1b3" stroke-width="3.2"/><path d="M120,452 h6 M140,452 h6" stroke="#afb1b3" stroke-width="4"/><rect x="123.9" y="655.9" width="4.2" height="22.2" fill="#afb1b3"/><path d="M128.5,664 L136,656.9 L136,661.8 L144.1,661.8 L144.1,676.1 L140,676.1 L140,666.2 L136,666.2 L136,671.2 Z" fill="#afb1b3"/><path d="M132.95,930.2 L139.1,940 L126.9,940 Z" fill="#afb1b3"/><rect x="121.9" y="942" width="10.2" height="10.2" fill="#afb1b3"/><circle cx="139" cy="947" r="5.1" fill="#afb1b3"/><rect x="133.9" y="1106" width="8.2" height="8.1" fill="#afb1b3"/><rect x="123.9" y="1116" width="8.2" height="8.1" fill="#afb1b3"/><rect x="133.9" y="1116" width="8.2" height="8.1" fill="#afb1b3"/><path d="M132.95,1270.1 L136.3,1278.5 L146,1279.2 L139.1,1285.2 L140.9,1295 L132.95,1290.2 L125,1295 L126.5,1285.2 L119.6,1279.2 L129.6,1278.5 Z" fill="#afb1b3"/><rect x="2394" y="926" width="18" height="26" rx="2.2" fill="#afb1b3"/><rect x="2396.2" y="930.2" width="13.6" height="15.6" fill="#3c3f41"/><rect x="2400.1" y="948.2" width="5.7" height="1.6" fill="#3c3f41"/><path d="M2407,1217.9 V1209 Q2407,1207 2405,1207 H2397 Q2395,1207 2395,1209 V1225 Q2395,1227 2397,1227 H2400" fill="none" stroke="#afb1b3" stroke-width="2"/><rect x="2395" y="1207" width="12" height="3.3" fill="#afb1b3"/><rect x="2402.9" y="1221" width="10.1" height="6" fill="none" stroke="#afb1b3" stroke-width="2"/><rect x="2401.9" y="1230" width="12.1" height="2" fill="#afb1b3"/><rect x="176" y="1364.1" width="4" height="3.8" fill="#afb1b3"/><rect x="182.1" y="1364.1" width="14.2" height="3.8" fill="#afb1b3"/><rect x="176" y="1370.5" width="4" height="3.8" fill="#afb1b3"/><rect x="182.1" y="1370.5" width="14.2" height="3.8" fill="#afb1b3"/><rect x="176" y="1377" width="4" height="3.8" fill="#afb1b3"/><rect x="182.1" y="1377" width="14.2" height="3.8" fill="#afb1b3"/><circle cx="321.25" cy="1371.4" r="10.6" fill="#afb1b3"/><rect x="319" y="1365.1" width="4.5" height="7.5" fill="#3c3f41"/><rect x="319" y="1374.5" width="4.5" height="3.5" fill="#3c3f41"/><path d="M480,1362 h4 v11.9 h8.25 v-4.4 h-4.1 l6.25,-7.75 l6.25,7.75 h-4.4 v8.5 h-12.25 v6.1 h-4 Z" fill="#afb1b3"/><rect x="581.9" y="1362" width="22.1" height="20" fill="#afb1b3"/><path d="M586.2,1366.4 L591.9,1370.8 L586.2,1375.5" fill="none" stroke="#3c3f41" stroke-width="1.7"/><rect x="592.5" y="1376.4" width="7.5" height="1.7" fill="#3c3f41"/><rect x="741.9" y="1366.1" width="22.1" height="4" fill="#afb1b3"/><rect x="741.9" y="1372" width="11.9" height="3.8" fill="#afb1b3"/><rect x="741.9" y="1378" width="18.1" height="4" fill="#afb1b3"/><path d="M1043.1,1370.1 V1365 Q1043.1,1362.4 1045.8,1362.4 H1052 Q1054.8,1362.4 1054.8,1365 V1370.1 H1060 V1372 H1056.9 V1378.2 H1053.8 L1057.5,1385.1 H1040 L1044.4,1378.2 H1041.5 V1372 H1037.9 V1370.1 Z" fill="#afb1b3"/><path d="M1999,1384.6 H1987 A11.8,11.8 0 1 1 1999,1372.8 Z" fill="none" stroke="#afb1b3" stroke-width="3"/><path d="M2155,1372 V1361 H2174 M2160,1380 V1366 H2177 V1369" fill="none" stroke="#afb1b3" stroke-width="2"/><path d="M2160,1379 H2165" stroke="#afb1b3" stroke-width="2"/><circle cx="2170.5" cy="1375.5" r="4.3" fill="none" stroke="#afb1b3" stroke-width="2.2"/><path d="M2173.6,1378.6 L2179,1384" stroke="#afb1b3" stroke-width="2.4"/><path d="M129.2,1403 H146.9 V1420.7 H129.2 Z" fill="none" stroke="#afb1b3" stroke-width="2.1"/><path d="M125,1406 V1424.8 H143.8" fill="none" stroke="#afb1b3" stroke-width="2.1"/><circle cx="2162" cy="1403.5" r="3.4" fill="#afb1b3"/><circle cx="2162" cy="1424.5" r="3.4" fill="#afb1b3"/><circle cx="2173.6" cy="1405.5" r="3.4" fill="#afb1b3"/><path d="M2162,1403.5 V1424.5 M2173.6,1405.5 Q2173.6,1413.5 2162,1418" fill="none" stroke="#afb1b3" stroke-width="3"/><circle cx="2292" cy="1414" r="14" fill="#afb1b3"/><circle cx="2287" cy="1410" r="1.9" fill="#3c3f41"/><circle cx="2297" cy="1410" r="1.9" fill="#3c3f41"/><path d="M2284.5,1417.5 Q2292,1424.5 2299.5,1417.5" fill="none" stroke="#3c3f41" stroke-width="2.1"/><circle cx="2339.8" cy="1414" r="14" fill="#afb1b3"/><circle cx="2334.8" cy="1410" r="1.9" fill="#3c3f41"/><circle cx="2344.8" cy="1410" r="1.9" fill="#3c3f41"/><path d="M2332.3,1421.5 Q2339.8,1415 2347.3,1421.5" fill="none" stroke="#3c3f41" stroke-width="2.1"/><path d="M2378,1411 A10,8.3 0 0 1 2398,1411 Z" fill="#afb1b3"/><path d="M2378,1412.8 H2398 V1420 A10,8 0 0 1 2378,1420 Z" fill="#afb1b3"/><path d="M2381.5,1400.5 L2384,1404.5 M2394.5,1400.5 L2392,1404.5" stroke="#afb1b3" stroke-width="1.8"/><rect x="2383.5" y="1406.6" width="2" height="2" fill="#3c3f41"/><rect x="2390.5" y="1406.6" width="2" height="2" fill="#3c3f41"/><circle cx="2400" cy="1426" r="5.2" fill="#3c3f41"/><circle cx="2400" cy="1426" r="4" fill="#00e000"/></svg>
<svg style="position:absolute;left:1492.76px;top:260.76px" width="30.27" height="22.23" viewBox="0 0 30.27 22.23"><svg x="0" y="0" width="30.27" height="22.23" viewBox="225 225 1430 1050" ><path d="M235,1275 C225,1100 250,900 340,740 C400,640 470,560 560,480 C680,410 850,380 1000,430 C1100,460 1200,520 1300,560 C1380,575 1450,555 1490,500 C1515,450 1500,380 1460,350 C1420,325 1350,325 1300,355 L1255,305 C1300,250 1400,215 1500,240 C1600,270 1655,370 1650,470 C1640,600 1560,720 1440,830 C1340,920 1290,1020 1275,1150 L1262,1275 L1080,1275 C1075,1180 1020,1130 960,1130 C900,1130 845,1180 840,1275 L660,1275 C655,1180 600,1130 540,1130 C480,1130 425,1180 420,1275 Z" fill="#afb1b3"/><path d="M470,590 C520,680 560,760 620,790 C680,800 800,720 880,670" fill="none" stroke="#3c3f41" stroke-width="42" opacity="0.9"/><circle cx="1180" cy="665" r="44" fill="#3c3f41" opacity="0.9"/></svg></svg>
<svg style="position:absolute;left:1527px;top:313px" width="30" height="22.03" viewBox="0 0 30 22.03"><svg x="0" y="0" width="30" height="22.03" viewBox="225 225 1430 1050" ><path d="M235,1275 C225,1100 250,900 340,740 C400,640 470,560 560,480 C680,410 850,380 1000,430 C1100,460 1200,520 1300,560 C1380,575 1450,555 1490,500 C1515,450 1500,380 1460,350 C1420,325 1350,325 1300,355 L1255,305 C1300,250 1400,215 1500,240 C1600,270 1655,370 1650,470 C1640,600 1560,720 1440,830 C1340,920 1290,1020 1275,1150 L1262,1275 L1080,1275 C1075,1180 1020,1130 960,1130 C900,1130 845,1180 840,1275 L660,1275 C655,1180 600,1130 540,1130 C480,1130 425,1180 420,1275 Z" fill="#87939a"/><path d="M470,590 C520,680 560,760 620,790 C680,800 800,720 880,670" fill="none" stroke="#3c3f41" stroke-width="42" opacity="0.9"/><circle cx="1180" cy="665" r="44" fill="#3c3f41" opacity="0.9"/></svg></svg>
<svg style="position:absolute;left:1563px;top:873px" width="30" height="22.03" viewBox="0 0 30 22.03"><svg x="0" y="0" width="30" height="22.03" viewBox="225 225 1430 1050" ><path d="M235,1275 C225,1100 250,900 340,740 C400,640 470,560 560,480 C680,410 850,380 1000,430 C1100,460 1200,520 1300,560 C1380,575 1450,555 1490,500 C1515,450 1500,380 1460,350 C1420,325 1350,325 1300,355 L1255,305 C1300,250 1400,215 1500,240 C1600,270 1655,370 1650,470 C1640,600 1560,720 1440,830 C1340,920 1290,1020 1275,1150 L1262,1275 L1080,1275 C1075,1180 1020,1130 960,1130 C900,1130 845,1180 840,1275 L660,1275 C655,1180 600,1130 540,1130 C480,1130 425,1180 420,1275 Z" fill="#87939a"/><path d="M470,590 C520,680 560,760 620,790 C680,800 800,720 880,670" fill="none" stroke="#3c3f41" stroke-width="42" opacity="0.9"/><circle cx="1180" cy="665" r="44" fill="#3c3f41" opacity="0.9"/></svg></svg>
<svg style="position:absolute;left:2390.3px;top:211px" width="25.7" height="18.87" viewBox="0 0 25.7 18.87"><svg x="0" y="0" width="25.7" height="18.87" viewBox="225 225 1430 1050" ><path d="M235,1275 C225,1100 250,900 340,740 C400,640 470,560 560,480 C680,410 850,380 1000,430 C1100,460 1200,520 1300,560 C1380,575 1450,555 1490,500 C1515,450 1500,380 1460,350 C1420,325 1350,325 1300,355 L1255,305 C1300,250 1400,215 1500,240 C1600,270 1655,370 1650,470 C1640,600 1560,720 1440,830 C1340,920 1290,1020 1275,1150 L1262,1275 L1080,1275 C1075,1180 1020,1130 960,1130 C900,1130 845,1180 840,1275 L660,1275 C655,1180 600,1130 540,1130 C480,1130 425,1180 420,1275 Z" fill="#afb1b3"/><path d="M470,590 C520,680 560,760 620,790 C680,800 800,720 880,670" fill="none" stroke="#2d2f30" stroke-width="42" opacity="0.9"/><circle cx="1180" cy="665" r="44" fill="#2d2f30" opacity="0.9"/></svg></svg>
<svg style="position:absolute;left:885.9px;top:1365.75px" width="26.4" height="16.25" viewBox="1711.2 110.4 225.6 144.8" preserveAspectRatio="none"><path d="M1732.4,255.2 V222.4 A90.8,90.8 0 0 1 1875.3,148" fill="none" stroke="#afb1b3" stroke-width="36"/><path d="M1914.4,159.8 A112,112 0 0 1 1936.8,222.4 V255.2 H1893 Z" fill="#afb1b3"/><path d="M1897,134 L1836,254 A24,24 0 0 1 1797.5,224 Z" fill="#afb1b3" stroke="#3c3f41" stroke-width="14" paint-order="stroke"/></svg>
<svg style="position:absolute;left:0;top:0" width="2536" height="1582" viewBox="0 0 2536 1582"><g style="filter:drop-shadow(1px 2px 0.5px rgba(0,0,0,0.5))"><path d="M1221.6,669.9 L1209,682 H1216.6 V690.7 H1227 V682 H1234.3 Z" fill="none" stroke="#589df6" stroke-width="2.8" stroke-linejoin="round"/><g fill="none" stroke="#589df6" stroke-width="2.8"><circle cx="1245.8" cy="673.5" r="3.45"/><circle cx="1259.8999999999999" cy="673.5" r="3.45"/><circle cx="1245.8" cy="687.6" r="3.45"/><circle cx="1259.8999999999999" cy="687.6" r="3.45"/><rect x="1249.25" y="676.95" width="7.199999999999818" height="7.199999999999932"/></g><g fill="none" stroke="#589df6" stroke-width="2.8"><circle cx="1255.6" cy="745.4" r="3.45"/><circle cx="1269.6999999999998" cy="745.4" r="3.45"/><circle cx="1255.6" cy="759.5" r="3.45"/><circle cx="1269.6999999999998" cy="759.5" r="3.45"/><rect x="1259.05" y="748.85" width="7.199999999999818" height="7.199999999999932"/></g><path d="M1287.3,814.1 H1294.9 L1303.9,834.6 H1311.9 M1302.5,814.1 H1311.9" fill="none" stroke="#589df6" stroke-width="2.9"/><path d="M1333.8,816.8 H1320.1 V830.2 M1320.1,816.8 L1337.3,832.8" fill="none" stroke="#589df6" stroke-width="2.9"/></g></svg>
</div></div>
<div style="position:absolute;left:112px;top:76px;width:2308px;height:1354px;border-radius:20px;border:2px solid rgba(255,255,255,0.2);pointer-events:none;"></div>
</body></html>
